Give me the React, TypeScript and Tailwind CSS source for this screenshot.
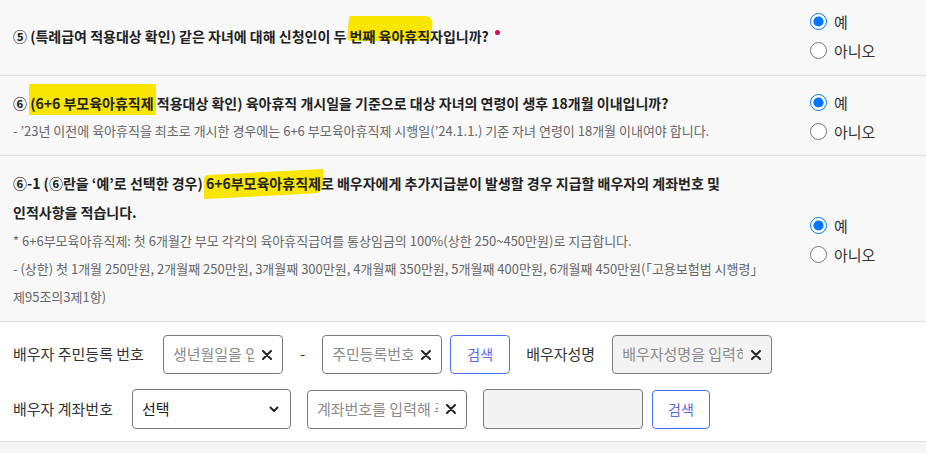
import React from "react";

const font = "font-['Noto_Sans_CJK_KR','Noto_Sans',sans-serif]";

function Hl({ children, cls }: { children: React.ReactNode; cls: string }) {
  return (
    <span className="relative">
      <span className={`absolute -z-10 bg-[#f8e600] ${cls}`} />
      {children}
    </span>
  );
}

function Radios() {
  return (
    <div className="flex w-[116px] shrink-0 flex-col gap-[12px]">
      <label className="flex items-center gap-[7px] text-[15px] leading-[17px] text-[#333]">
        <input type="radio" defaultChecked className="m-0 h-[17px] w-[17px] accent-[#0075ff]" />
        예
      </label>
      <label className="flex items-center gap-[7px] text-[15px] leading-[17px] text-[#333]">
        <input type="radio" className="m-0 h-[17px] w-[17px]" />
        아니오
      </label>
    </div>
  );
}

function X() {
  return (
    <svg width="10" height="10" viewBox="0 0 10 10" className="shrink-0">
      <path d="M1 1L9 9M9 1L1 9" stroke="#222" strokeWidth="2" strokeLinecap="round" />
    </svg>
  );
}

function Field({ w, ph, gray }: { w: string; ph: string; gray?: boolean }) {
  return (
    <div
      className={`flex h-[39px] items-center gap-2 overflow-hidden rounded-[4px] border border-[#7a7a7a] pl-[9px] pr-[10px] ${w} ${gray ? "bg-[#f3f3f3]" : "bg-white"}`}
    >
      <span className="flex-1 overflow-hidden whitespace-nowrap text-[15px] text-[#8a8a8a]">{ph}</span>
      <X />
    </div>
  );
}

function SearchBtn({ w }: { w: string }) {
  return (
    <button className={`h-[39px] ${w} rounded-[4px] border border-[#4d6ef0] bg-white text-[14px] text-[#5a68e6]`}>
      검색
    </button>
  );
}

export default function App() {
  return (
    <div className={`min-h-[453px] w-[926px] bg-[#f5f5f5] ${font}`}>
      {/* Section 5 */}
      <section className="isolate flex h-[76px] items-center border-b border-[#dedede] bg-[#f8f8f8] pb-[3px] pl-[13px]">
        <div className="flex-1 text-[14px] font-bold leading-[28px] text-[#222]">
          ⑤ (특례급여 적용대상 확인) 같은 자녀에 대해 신청인이 두{" "}
          <Hl cls="-left-[2px] -right-[2px] -top-[10px] bottom-[5px] rounded-tr-[8px] rounded-bl-[4px] -skew-x-6">번째 육아휴직</Hl>자입니까?
          <span className="relative -top-[7px] ml-[6px] inline-block h-[5px] w-[5px] rounded-full bg-[#e3004f]" />
        </div>
        <Radios />
      </section>

      {/* Section 6 */}
      <section className="isolate flex items-center border-b border-[#dedede] bg-[#f8f8f8] pb-[10px] pl-[13px] pt-[13px]">
        <div className="flex-1">
          <div className="text-[14px] font-bold leading-[28px] text-[#222]">
            ⑥ <Hl cls="-left-[1px] -right-[2px] -top-[9px] -bottom-[2px]">(6+6 부모육아휴직제</Hl> 적용대상 확인) 육아휴직 개시일을 기준으로 대상 자녀의 연령이 생후 18개월 이내입니까?
          </div>
          <div className="text-[13px] leading-[28px] text-[#666]">
            - ’23년 이전에 육아휴직을 최초로 개시한 경우에는 6+6 부모육아휴직제 시행일(’24.1.1.) 기준 자녀 연령이 18개월 이내여야 합니다.
          </div>
        </div>
        <Radios />
      </section>

      {/* Section 6-1 */}
      <section className="isolate flex items-center border-b border-[#dedede] bg-[#f8f8f8] pb-[10px] pl-[13px] pt-[13px]">
        <div className="flex-1">
          <div className="text-[14px] font-bold leading-[29px] text-[#222]">
            ⑥-1 (⑥란을 ‘예’로 선택한 경우){" "}
            <Hl cls="-left-[2px] -right-[2px] -top-[1px] -bottom-[3px] -skew-y-3 rounded-br-[8px] rounded-tl-[4px]">6+6부모육아휴직제</Hl>로 배우자에게 추가지급분이 발생할 경우 지급할 배우자의 계좌번호 및
            <br />
            인적사항을 적습니다.
          </div>
          <div className="text-[13px] leading-[28px] text-[#666]">
            * 6+6부모육아휴직제: 첫 6개월간 부모 각각의 육아휴직급여를 통상임금의 100%(상한 250~450만원)로 지급합니다.
            <br />
            - (상한) 첫 1개월 250만원, 2개월째 250만원, 3개월째 300만원, 4개월째 350만원, 5개월째 400만원, 6개월째 450만원(「고용보험법 시행령」
            <br />
            제95조의3제1항)
          </div>
        </div>
        <Radios />
      </section>

      {/* Inputs */}
      <section className="flex flex-col gap-[15px] border-b border-[#dedede] bg-white pb-[12px] pl-[13px] pt-[13px]">
        <div className="flex items-center">
          <span className="mr-[19px] text-[15px] text-[#333]">배우자 주민등록 번호</span>
          <Field w="w-[120px]" ph="생년월일을 입력" />
          <span className="mx-[17px] text-[15px] text-[#333]">-</span>
          <Field w="w-[120px]" ph="주민등록번호" />
          <div className="ml-2">
            <SearchBtn w="w-[60px]" />
          </div>
          <span className="ml-4 mr-[17px] text-[15px] text-[#333]">배우자성명</span>
          <Field w="w-[160px]" ph="배우자성명을 입력하세요" gray />
        </div>
        <div className="flex items-center">
          <span className="mr-[19px] text-[15px] text-[#333]">배우자 계좌번호</span>
          <div className="flex h-[40px] w-[159px] items-center justify-between rounded-[4px] border border-[#7a7a7a] bg-white pl-[9px] pr-[11px]">
            <span className="text-[15px] text-[#222]">선택</span>
            <svg width="10" height="7" viewBox="0 0 10 7">
              <path d="M1.5 1.5L5 5L8.5 1.5" stroke="#222" strokeWidth="2" fill="none" strokeLinecap="round" strokeLinejoin="round" />
            </svg>
          </div>
          <div className="ml-4">
            <Field w="w-[160px]" ph="계좌번호를 입력해 주세요" />
          </div>
          <div className="ml-4 h-[40px] w-[160px] rounded-[4px] border border-[#7a7a7a] bg-[#f3f3f3]" />
          <div className="ml-[9px]">
            <SearchBtn w="w-[58px]" />
          </div>
        </div>
      </section>
    </div>
  );
}
